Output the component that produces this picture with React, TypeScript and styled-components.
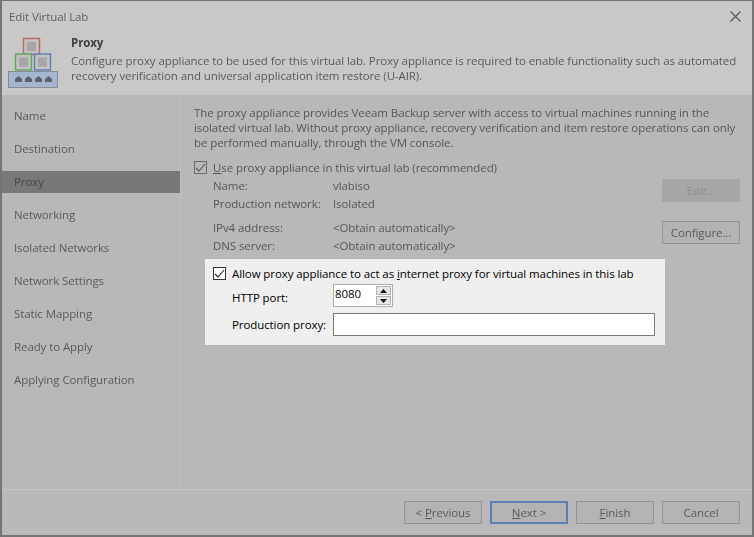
import React from "react";
import styled, { createGlobalStyle } from "styled-components";

const GlobalStyle = createGlobalStyle`
  html, body {
    margin: 0;
    padding: 0;
    background: #6f6f6f;
  }
  body {
    font-family: "Open Sans", "Noto Sans", sans-serif;
    font-size: 11.5px;
    letter-spacing: -0.09px;
  }
`;

const steps = [
  "Name",
  "Destination",
  "Proxy",
  "Networking",
  "Isolated Networks",
  "Network Settings",
  "Static Mapping",
  "Ready to Apply",
  "Applying Configuration",
];

const ProxyIcon = () => (
  <svg width="52" height="52" viewBox="0 0 52 52">
    <rect x="15.5" y="1.5" width="16" height="16" fill="#c2c2c2" stroke="#bd6666" strokeWidth="1.4" />
    <rect x="19" y="5" width="9" height="9" fill="#a6a6a6" />
    <rect x="7.5" y="17" width="16" height="16" fill="#c2c2c2" stroke="#5ea55e" strokeWidth="1.4" />
    <rect x="11" y="20.5" width="9" height="9" fill="#a6a6a6" />
    <rect x="26.5" y="17" width="16" height="16" fill="#c2c2c2" stroke="#5a7db5" strokeWidth="1.4" />
    <rect x="30" y="20.5" width="9" height="9" fill="#a6a6a6" />
    <rect x="0.5" y="34.5" width="49" height="16" fill="#a3b5d0" stroke="#8b8b8b" />
    {[7, 17, 27, 37].map((x) => (
      <path key={x} d={`M${x} 45v-3l3.5-3 3.5 3v3z`} fill="#5d6068" />
    ))}
  </svg>
);

const CheckMark = () => (
  <svg width="11" height="11" viewBox="0 0 11 11">
    <path d="M1 6l3 3 6-7" fill="none" stroke="currentColor" strokeWidth="1.1" />
  </svg>
);

const CloseIcon = () => (
  <svg width="11" height="11" viewBox="0 0 11 11">
    <path d="M0.5 0.5l10 10M10.5 0.5l-10 10" stroke="#555" strokeWidth="1.1" fill="none" />
  </svg>
);

export default function App() {
  return (
    <>
      <GlobalStyle />
      <Screen>
        <Dialog>
          <Header>
            <TitleBar>
              <span>Edit Virtual Lab</span>
              <CloseIcon />
            </TitleBar>
            <HeaderBody>
              <IconSlot>
                <ProxyIcon />
              </IconSlot>
              <HeaderText>
                <HeaderTitle>Proxy</HeaderTitle>
                <HeaderDescription>
                  Configure proxy appliance to be used for this virtual lab. Proxy appliance is required to enable functionality such as automated
                  <br />
                  recovery verification and universal application item restore (U-AIR).
                </HeaderDescription>
              </HeaderText>
            </HeaderBody>
          </Header>

          <Middle>
            <Nav>
              {steps.map((step) => (
                <NavItem key={step} $active={step === "Proxy"}>
                  {step}
                </NavItem>
              ))}
            </Nav>
            <Content>
              <Intro>
                The proxy appliance provides Veeam Backup server with access to virtual machines running in the
                <br />
                isolated virtual lab. Without proxy appliance, recovery verification and item restore operations can only
                <br />
                be performed manually, through the VM console.
              </Intro>
              <CheckRow>
                <CheckBox $dim>
                  <CheckMark />
                </CheckBox>
                <span>
                  <u>U</u>se proxy appliance in this virtual lab (recommended)
                </span>
              </CheckRow>
              <Settings>
                <SettingsColumn>
                  <InfoGroup>
                    <InfoRow>
                      <InfoLabel>Name:</InfoLabel>
                      <span>vlabiso</span>
                    </InfoRow>
                    <InfoRow>
                      <InfoLabel>Production network:</InfoLabel>
                      <span>Isolated</span>
                    </InfoRow>
                  </InfoGroup>
                  <InfoGroup>
                    <InfoRow>
                      <InfoLabel>IPv4 address:</InfoLabel>
                      <span>&lt;Obtain automatically&gt;</span>
                    </InfoRow>
                    <InfoRow>
                      <InfoLabel>DNS server:</InfoLabel>
                      <span>&lt;Obtain automatically&gt;</span>
                    </InfoRow>
                  </InfoGroup>
                </SettingsColumn>
                <SideButtons>
                  <Button disabled>Edit...</Button>
                  <Button>Configure...</Button>
                </SideButtons>
              </Settings>
            </Content>
          </Middle>

          <Footer>
            <Button>
              &lt; <u>P</u>revious
            </Button>
            <Button $primary>
              <u>N</u>ext &gt;
            </Button>
            <Button>
              <u>F</u>inish
            </Button>
            <Button>Cancel</Button>
          </Footer>
        </Dialog>

        <Highlight>
          <HighlightCheck>
            <CheckBox>
              <CheckMark />
            </CheckBox>
            <span>
              Allow proxy appliance to act as <u>i</u>nternet proxy for virtual machines in this lab
            </span>
          </HighlightCheck>
          <FieldRow>
            <FieldLabel $low>HTTP port:</FieldLabel>
            <Spinner>
              <SpinnerValue>8080</SpinnerValue>
              <SpinnerArrows>
                <SpinnerArrow>
                  <svg width="7" height="4" viewBox="0 0 7 4">
                    <path d="M3.5 0L7 4H0z" fill="#111" />
                  </svg>
                </SpinnerArrow>
                <SpinnerArrow>
                  <svg width="7" height="4" viewBox="0 0 7 4">
                    <path d="M0 0h7L3.5 4z" fill="#111" />
                  </svg>
                </SpinnerArrow>
              </SpinnerArrows>
            </Spinner>
          </FieldRow>
          <ProxyRow>
            <FieldLabel>Production proxy:</FieldLabel>
            <ProxyInput />
          </ProxyRow>
        </Highlight>
      </Screen>
    </>
  );
}

const Screen = styled.div`
  position: relative;
  width: 754px;
  height: 537px;
  overflow: hidden;
  background: #6f6f6f;
`;

const Dialog = styled.div`
  box-sizing: border-box;
  width: 754px;
  height: 537px;
  display: flex;
  flex-direction: column;
  border: solid #757575;
  border-width: 1px 2px 2px 2px;
  background: #b8b8b8;
  color: #565656;
  filter: blur(0.55px);
`;

const Header = styled.div`
  height: 94px;
  flex: none;
  background: #c8c8c8;
  display: flex;
  flex-direction: column;
`;

const TitleBar = styled.div`
  height: 30px;
  display: flex;
  align-items: center;
  justify-content: space-between;
  padding: 0 11px 0 7px;
  color: #606060;
`;

const HeaderBody = styled.div`
  display: flex;
  gap: 11px;
`;

const IconSlot = styled.div`
  width: 52px;
  height: 52px;
  margin: 6px 0 0 6px;
`;

const HeaderText = styled.div`
  display: flex;
  flex-direction: column;
  padding-top: 3px;
`;

const HeaderTitle = styled.div`
  font-weight: 700;
  color: #3f3f3f;
  line-height: 17px;
`;

const HeaderDescription = styled.div`
  line-height: 15px;
  margin-top: 2px;
  white-space: nowrap;
  color: #5a5a5a;
`;

const Middle = styled.div`
  flex: 1;
  display: flex;
  min-height: 0;
`;

const Nav = styled.div`
  width: 179px;
  flex: none;
  box-sizing: border-box;
  padding-top: 10px;
  display: flex;
  flex-direction: column;
  gap: 11px;
  border-right: 1px solid #bfbfbf;
`;

const NavItem = styled.div<{ $active?: boolean }>`
  box-sizing: border-box;
  height: 22px;
  display: flex;
  align-items: center;
  padding: 0 0 2px 12px;
  background: ${(props) => (props.$active ? "#787878" : "transparent")};
  color: ${(props) => (props.$active ? "#444" : "#5a5a5a")};
`;

const Content = styled.div`
  flex: 1;
  min-width: 0;
  padding: 10px 12px 0 13px;
  display: flex;
  flex-direction: column;
`;

const Intro = styled.div`
  line-height: 15px;
  white-space: nowrap;
`;

const CheckRow = styled.div`
  display: flex;
  align-items: center;
  gap: 6px;
  margin-top: 9px;
  height: 17px;
`;

const CheckBox = styled.div<{ $dim?: boolean }>`
  box-sizing: border-box;
  width: 13px;
  height: 13px;
  flex: none;
  display: flex;
  align-items: center;
  justify-content: center;
  border: 1px solid ${(props) => (props.$dim ? "#6c6c6c" : "#333")};
  color: ${(props) => (props.$dim ? "#555" : "#222")};
  background: ${(props) => (props.$dim ? "transparent" : "#fff")};
`;

const Settings = styled.div`
  display: flex;
  justify-content: space-between;
  padding-left: 19px;
`;

const SettingsColumn = styled.div`
  display: flex;
  flex-direction: column;
  gap: 6px;
`;

const InfoGroup = styled.div`
  display: flex;
  flex-direction: column;
`;

const InfoRow = styled.div`
  display: flex;
  height: 18px;
  align-items: center;
`;

const InfoLabel = styled.span`
  width: 120px;
`;

const SideButtons = styled.div`
  display: flex;
  flex-direction: column;
  gap: 19px;
  margin-top: 3px;
`;

const Button = styled.button<{ $primary?: boolean }>`
  box-sizing: border-box;
  width: 78px;
  height: 23px;
  padding: 0;
  font: inherit;
  letter-spacing: inherit;
  color: #5a5a5a;
  background: #b3b3b3;
  border: 1px solid ${(props) => (props.$primary ? "#5b7fb5" : "#939393")};
  ${(props) => props.$primary && "box-shadow: inset 0 0 0 1px #5b7fb5;"}

  &:disabled {
    background: #a6a6a6;
    border-color: #a6a6a6;
    color: #8c8c8c;
  }
`;

const Footer = styled.div`
  height: 46px;
  flex: none;
  box-sizing: border-box;
  display: flex;
  justify-content: flex-end;
  gap: 8px;
  padding: 11px 12px 0 0;
  background: #b9b9b9;
  border-top: 1px solid #c4c4c4;
`;

const Highlight = styled.div`
  position: absolute;
  left: 205px;
  top: 259px;
  width: 460px;
  height: 86px;
  box-sizing: border-box;
  padding: 6px 10px 0 8px;
  background: #efefef;
  color: #000;
  display: flex;
  flex-direction: column;
`;

const HighlightCheck = styled.div`
  display: flex;
  align-items: center;
  gap: 6px;
  height: 17px;
  white-space: nowrap;
`;

const FieldRow = styled.div`
  display: flex;
  align-items: center;
  padding-left: 19px;
  margin-top: 2px;
  height: 23px;
`;

const ProxyRow = styled(FieldRow)`
  margin-top: 6px;
`;

const FieldLabel = styled.span<{ $low?: boolean }>`
  width: 101px;
  flex: none;
  margin-top: ${(props) => (props.$low ? "3px" : "0")};
`;

const Spinner = styled.div`
  box-sizing: border-box;
  width: 60px;
  height: 23px;
  display: flex;
  justify-content: space-between;
  border: 1px solid #aeaeae;
  background: #fff;
`;

const SpinnerValue = styled.span`
  padding: 0 0 0 1px;
  line-height: 17px;
`;

const SpinnerArrows = styled.div`
  width: 15px;
  display: flex;
  flex-direction: column;
  gap: 1px;
  padding: 1px;
`;

const SpinnerArrow = styled.div`
  flex: 1;
  display: flex;
  align-items: center;
  justify-content: center;
  background: #e6e6e6;
  border: 1px solid #b4b4b4;
`;

const ProxyInput = styled.div`
  box-sizing: border-box;
  width: 322px;
  height: 23px;
  background: #fff;
  border: 1px solid #7a7a7a;
`;
